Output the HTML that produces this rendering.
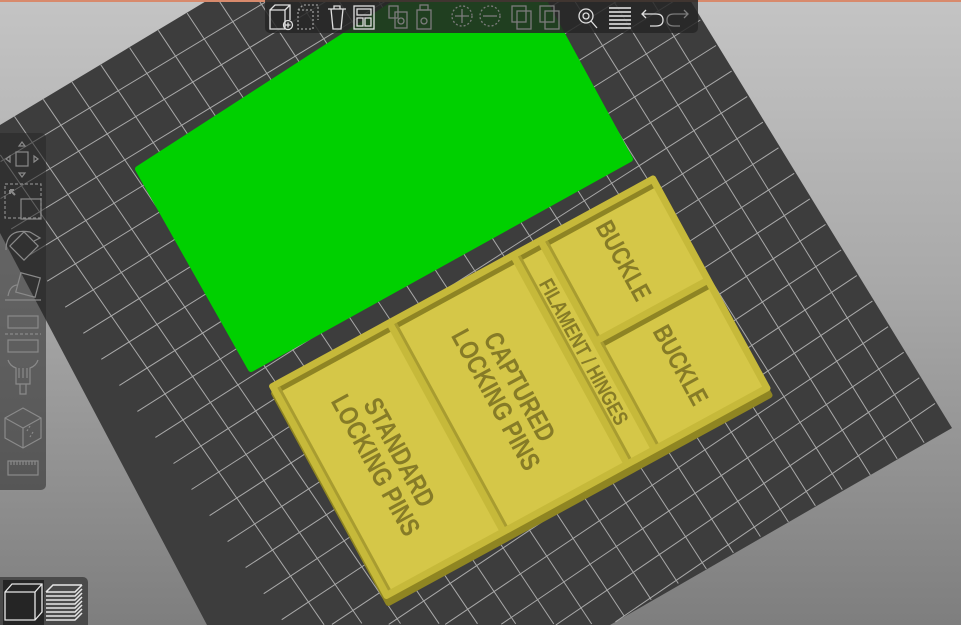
<!DOCTYPE html>
<html><head><meta charset="utf-8">
<style>
html,body{margin:0;padding:0;width:961px;height:625px;overflow:hidden;}
body{position:relative;background:linear-gradient(180deg,#c4c4c4 0%,#a9a9a9 45%,#7e7e7e 100%);font-family:"Liberation Sans",sans-serif;}
#scene{position:absolute;left:0;top:0;}
#topbar{position:absolute;left:265px;top:0;width:433px;height:33px;background:rgba(38,38,38,0.85);border-radius:0 0 5px 5px;}
#orange{position:absolute;left:0;top:0;width:961px;height:2px;background:#d88a6c;}
#leftbar{position:absolute;left:0;top:133px;width:46px;height:357px;background:rgba(40,40,40,0.55);border-radius:0 5px 5px 0;}
#blbox{position:absolute;left:0;top:577px;width:88px;height:48px;background:rgba(60,60,60,0.8);border-radius:0 5px 0 0;}
.tt{font-family:"Liberation Sans",sans-serif;font-weight:bold;fill:#867b27;}
</style></head><body>
<svg id="scene" width="961" height="625" viewBox="0 0 961 625">
<polygon points="0,125 208,0 690,0 952,428 610,625 207,625 0,233" fill="#3d3d3d"/>
<g id="grid" stroke="#b5b5b5" stroke-width="1" opacity="0.9"></g>
<polygon points="138,169 395,3 545,3 630,159 251,369" fill="#00d000" stroke="#00d000" stroke-width="6" stroke-linejoin="round"/>
<g transform="translate(270,392) rotate(-28.6)"><rect width="440" height="245" rx="3" fill="#8f8522"/></g>
<g transform="translate(268,385) rotate(-28.6)">
 <rect width="440" height="245" rx="3" fill="#c6b93a"/>
 <g fill="#d5c748">
  <rect x="7" y="7" width="126" height="231"/><rect x="140" y="7" width="134" height="231"/><rect x="281" y="7" width="24" height="231"/><rect x="312" y="7" width="121" height="108"/><rect x="312" y="122" width="121" height="116"/>
 </g>
 <g fill="#8e8424">
  <rect x="7" y="7" width="126" height="5"/><rect x="140" y="7" width="134" height="5"/><rect x="281" y="7" width="24" height="5"/><rect x="312" y="7" width="121" height="5"/><rect x="312" y="122" width="121" height="5"/>
 </g>
 <g fill="#a89c30">
  <rect x="7" y="7" width="3" height="231"/><rect x="140" y="7" width="3" height="231"/><rect x="281" y="7" width="3" height="231"/><rect x="312" y="7" width="3" height="108"/><rect x="312" y="122" width="3" height="116"/>
 </g>
 <g class="tt" text-anchor="middle">
  <g transform="translate(70,122) rotate(90) scale(0.8,1)" font-size="27"><text x="0" y="-4">STANDARD</text><text x="0" y="23">LOCKING PINS</text></g>
  <g transform="translate(207,122) rotate(90) scale(0.8,1)" font-size="27"><text x="0" y="-4">CAPTURED</text><text x="0" y="23">LOCKING PINS</text></g>
  <g transform="translate(293,122) rotate(90) scale(0.8,1)" font-size="21"><text x="0" y="7">FILAMENT / HINGES</text></g>
  <g transform="translate(372,61) rotate(90) scale(0.8,1)" font-size="26"><text x="0" y="9">BUCKLE</text></g>
  <g transform="translate(372,180) rotate(90) scale(0.8,1)" font-size="26"><text x="0" y="9">BUCKLE</text></g>
 </g>
</g>
</svg>
<script>
(function(){var TL=[-43,151],TR=[561,-211],BR=[952,428],BL=[408,802];var g=document.getElementById('grid');var s='';
var poly=[[0,125],[208,0],[690,0],[952,428],[610,625],[207,625],[0,233]];
function inside(p){var c=false;for(var i=0,j=poly.length-1;i<poly.length;j=i++){var a=poly[i],b=poly[j];if(((a[1]>p[1])!=(b[1]>p[1]))&&(p[0]<(b[0]-a[0])*(p[1]-a[1])/(b[1]-a[1])+a[0]))c=!c;}return c;}
function L(a,b){var t0=-1,t1=-1,N=400;for(var k=0;k<=N;k++){var t=k/N;var p=[a[0]+(b[0]-a[0])*t,a[1]+(b[1]-a[1])*t];if(inside(p)){if(t0<0)t0=t;t1=t;}}
 if(t0<0)return;var p0=[a[0]+(b[0]-a[0])*t0,a[1]+(b[1]-a[1])*t0],p1=[a[0]+(b[0]-a[0])*t1,a[1]+(b[1]-a[1])*t1];
 s+='<line x1="'+p0[0].toFixed(1)+'" y1="'+p0[1].toFixed(1)+'" x2="'+p1[0].toFixed(1)+'" y2="'+p1[1].toFixed(1)+'"/>';}
function lerp(a,b,t){return[a[0]+(b[0]-a[0])*t,a[1]+(b[1]-a[1])*t];}
var nu=21,nv=25;for(var i=1;i<nu;i++){var u=i/nu;L(lerp(TL,TR,u),lerp(BL,BR,u));}
for(var j=1;j<nv;j++){var v=j/nv;L(lerp(TL,BL,v),lerp(TR,BR,v));}
g.innerHTML=s;})();
</script>
<div id="orange"></div>
<div id="topbar">
<svg width="433" height="33" viewBox="265 0 433 33" fill="none" stroke-width="1.3">
 <g stroke="#e0e0e0">
  <path d="M270 10 L275 5 L290 5 L290 20 M270 10 L285 10 L285 29 L270 29 Z M285 10 L290 5"/><circle cx="288" cy="25" r="4.5"/><path d="M285.5 25h5M288 22.5v5"/>
 </g>
 <g stroke="#9a9a9a" stroke-dasharray="2 2"><path d="M298 10 L303 5 L318 5 L318 20 M298 10 L313 10 L313 29 L298 29 Z"/></g>
 <g stroke="#e0e0e0">
  <path d="M328 9 H346 M331 9 L333 29 H341 L343 9 M334 9 V6 H340 V9"/>
  <rect x="354" y="6" width="20" height="23"/><rect x="357" y="9" width="14" height="6"/><rect x="357" y="18" width="6" height="8"/><rect x="365" y="18" width="6" height="8"/>
  <circle cx="586" cy="16" r="7"/><circle cx="586" cy="16" r="3"/><path d="M591 21 L597 28"/>
  <path d="M609 8h22M609 12h22M609 16h22M609 20h22M609 24h22M609 28h22" stroke="#bcbcbc" stroke-width="2"/>
  <path d="M646 10 L642 14 L646 18 M642 14 H656 Q663 14 663 20 Q663 26 656 26 H650"/>
 </g>
 <g stroke="#7c7c7c">
  <rect x="389" y="6" width="9" height="12"/><rect x="395" y="12" width="12" height="16"/><circle cx="401" cy="21" r="3"/>
  <rect x="417" y="10" width="14" height="19"/><rect x="420" y="5" width="8" height="5"/><circle cx="424" cy="21" r="3"/>
  <circle cx="462" cy="16" r="10" stroke-dasharray="2 2"/><path d="M455 16h14M462 9v14"/>
  <circle cx="490" cy="16" r="10" stroke-dasharray="2 2"/><path d="M483 16h14"/>
  <rect x="512" y="6" width="14" height="16"/><rect x="517" y="11" width="14" height="18"/>
  <rect x="540" y="6" width="14" height="16"/><rect x="545" y="11" width="14" height="18"/>
  <path d="M684 10 L688 14 L684 18 M688 14 H674 Q667 14 667 20 Q667 26 674 26 H680"/>
 </g>
</svg>
</div>
<div id="leftbar">
<svg width="46" height="357" viewBox="0 133 46 357" fill="none" stroke="#8a8a8a" stroke-width="1.2">
 <rect x="16" y="152" width="12" height="14"/><path d="M22 142l-3 4h6z M22 177l-3-4h6z M6 159l4-3v6z M38 159l-4-3v6z"/>
 <rect x="5" y="184" width="36" height="34" stroke-dasharray="3 2"/><rect x="21" y="199" width="20" height="20"/><path d="M10 190l5 5M10 190h4M10 190v4" stroke-width="2"/>
 <path d="M6 250 Q6 228 30 232 M30 232 l10 6 l-6 3"/><rect x="14" y="236" width="20" height="20" transform="rotate(45 24 246)"/>
 <rect x="18" y="275" width="20" height="20" transform="rotate(15 28 285)"/><path d="M5 300h36M8 296 Q10 285 18 285"/>
 <rect x="8" y="316" width="30" height="12"/><path d="M5 334h36" stroke-dasharray="3 2"/><rect x="8" y="340" width="30" height="12"/>
 <path d="M8 360 Q10 366 16 368 V384 H30 V368 Q36 366 38 360 M19 368v10M23 368v10M27 368v10M20 384v10h6v-10"/>
 <path d="M5 418 L23 408 L41 418 L41 438 L23 448 L5 438 Z M5 418 L23 428 L41 418 M23 428 V448"/><path d="M30 426l-3 5M33 432l-3 5" stroke-dasharray="2 2"/>
 <rect x="8" y="461" width="30" height="14"/><path d="M11 461v4M14 461v4M17 461v4M20 461v4M23 461v4M26 461v4M29 461v4M32 461v4M35 461v4"/>
</svg>
</div>
<div id="blbox">
<svg width="88" height="48" viewBox="0 577 88 48" fill="none" stroke="#e8e8e8" stroke-width="1.3">
 <rect x="3" y="580" width="41" height="45" fill="#252525" stroke="none"/>
 <path d="M5 592 L12 584 L42 584 L42 612 L35 620 L5 620 Z M5 592 H35 V620 M35 592 L42 584" />
 <g stroke-width="1.5"><path d="M46 592 L53 585 L82 585 M46 592 H75 L82 585"/>
 <path d="M46 596h29l7-7M46 600h29l7-7M46 604h29l7-7M46 608h29l7-7M46 612h29l7-7M46 616h29l7-7M46 620h29l7-7"/></g>
</svg>
</div>
</body></html>
